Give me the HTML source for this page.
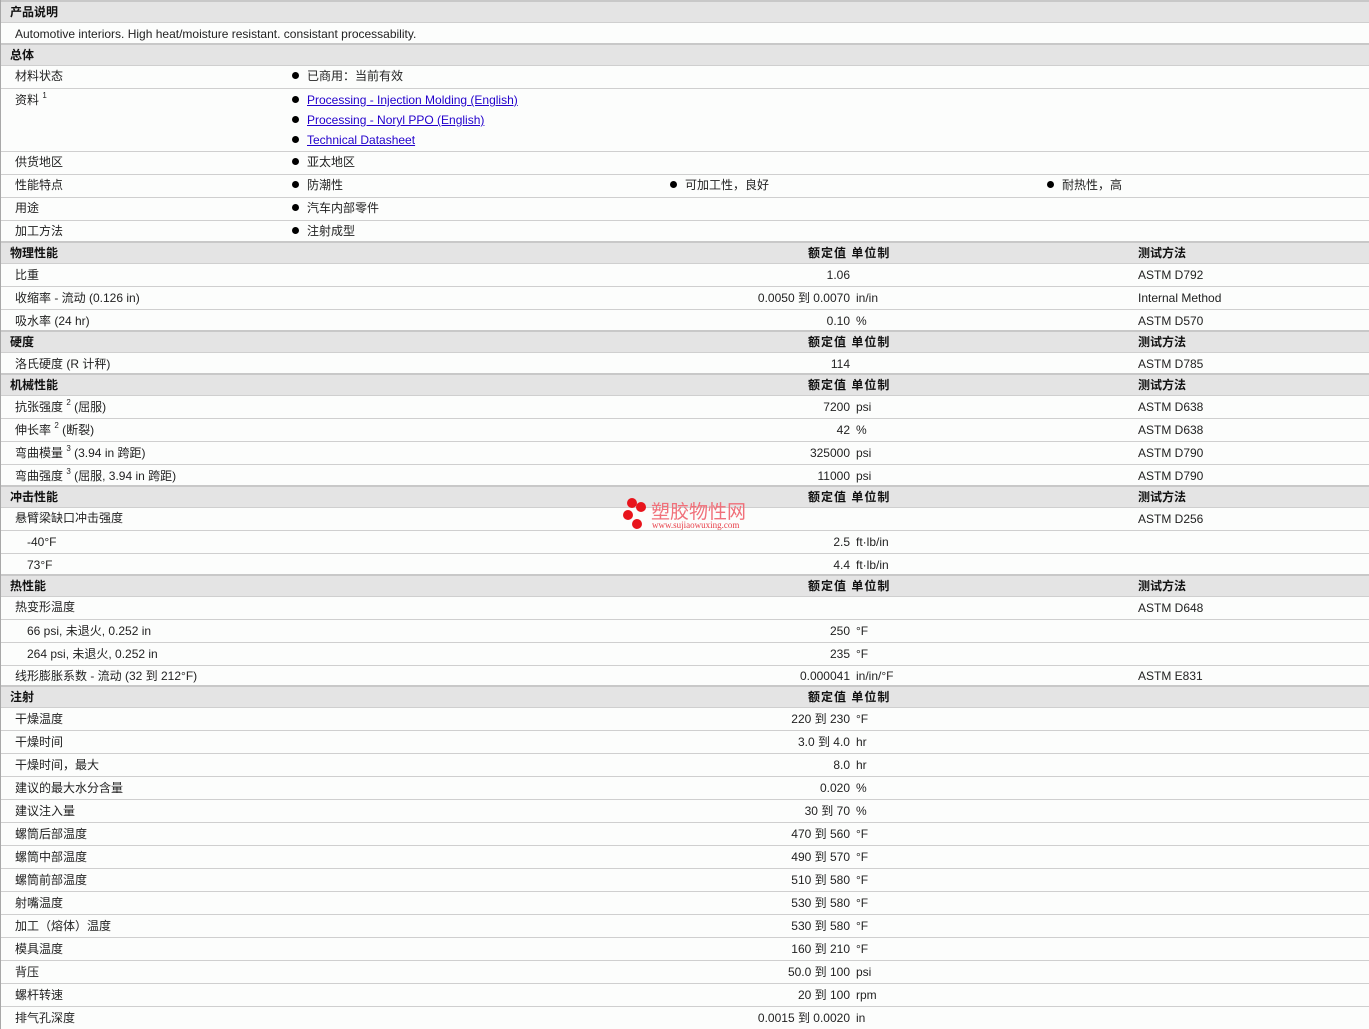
<!DOCTYPE html>
<html><head><meta charset="utf-8"><style>
*{margin:0;padding:0;box-sizing:border-box}
body{width:1369px;height:1029px;background:#fcfdfc;font-family:"Liberation Sans","Noto Sans CJK SC",sans-serif;font-size:12px;color:#222;position:relative;overflow:hidden}
.edge{position:absolute;left:0;top:0;width:1px;height:1029px;background:#a8a8a8}
.r{position:absolute;left:1px;width:1368px;border-top:1px solid #cfcfcf}
.h{background:#e4e4e4;border-top:2px solid #c8c8c8;font-weight:bold;color:#111}
.r span{position:absolute;white-space:nowrap}
.l{left:14px}.h .l{left:9px}
.b{left:291px}.b::before{content:"";display:inline-block;width:7px;height:7px;border-radius:50%;background:#000;margin-right:8px;vertical-align:1px}
.v{right:519px;text-align:right}
.u{left:855px}.t{left:1137px}
.hv{left:807px;letter-spacing:1px}
a{color:#2200cc;text-decoration:underline}
sup{font-size:8px;line-height:0;vertical-align:0;position:relative;top:-6px}
</style></head><body>
<div class="edge"></div>
<div class="r h" style="top:0;height:22px;line-height:21px"><span class="l">产品说明</span></div>
<div class="r" style="top:22px;height:22px;line-height:22px"><span class="l">Automotive interiors. High heat/moisture resistant. consistant processability.</span></div>
<div class="r h" style="top:43px;height:22px;line-height:20px"><span class="l">总体</span></div>
<div class="r" style="top:65px;height:23px;line-height:21px"><span class="l">材料状态</span><span class="b">已商用：当前有效</span></div>
<div class="r" style="top:88px;height:63px;line-height:22px"><span class="l">资料 <sup>1</sup></span><span class="b" style="top:0"><a>Processing - Injection Molding (English)</a></span><span class="b" style="top:20px"><a>Processing - Noryl PPO (English)</a></span><span class="b" style="top:40px"><a>Technical Datasheet</a></span></div>
<div class="r" style="top:151px;height:23px;line-height:21px"><span class="l">供货地区</span><span class="b">亚太地区</span></div>
<div class="r" style="top:174px;height:23px;line-height:21px"><span class="l">性能特点</span><span class="b">防潮性</span><span class="b" style="left:669px">可加工性，良好</span><span class="b" style="left:1046px">耐热性，高</span></div>
<div class="r" style="top:197px;height:23px;line-height:21px"><span class="l">用途</span><span class="b">汽车内部零件</span></div>
<div class="r" style="top:220px;height:22px;line-height:21px"><span class="l">加工方法</span><span class="b">注射成型</span></div>

<div class="r h" style="top:241px;height:22px;line-height:20px"><span class="l">物理性能</span><span class="hv">额定值 单位制</span><span class="t">测试方法</span></div>
<div class="r" style="top:263px;height:23px;line-height:22px"><span class="l">比重</span><span class="v">1.06</span><span class="t">ASTM D792</span></div>
<div class="r" style="top:286px;height:23px;line-height:22px"><span class="l">收缩率 - 流动 (0.126 in)</span><span class="v">0.0050 到 0.0070</span><span class="u">in/in</span><span class="t">Internal Method</span></div>
<div class="r" style="top:309px;height:22px;line-height:22px"><span class="l">吸水率 (24 hr)</span><span class="v">0.10</span><span class="u">%</span><span class="t">ASTM D570</span></div>
<div class="r h" style="top:330px;height:22px;line-height:20px"><span class="l">硬度</span><span class="hv">额定值 单位制</span><span class="t">测试方法</span></div>
<div class="r" style="top:352px;height:22px;line-height:22px"><span class="l">洛氏硬度 (R 计秤)</span><span class="v">114</span><span class="t">ASTM D785</span></div>
<div class="r h" style="top:373px;height:22px;line-height:20px"><span class="l">机械性能</span><span class="hv">额定值 单位制</span><span class="t">测试方法</span></div>
<div class="r" style="top:395px;height:23px;line-height:22px"><span class="l">抗张强度 <sup>2</sup> (屈服)</span><span class="v">7200</span><span class="u">psi</span><span class="t">ASTM D638</span></div>
<div class="r" style="top:418px;height:23px;line-height:22px"><span class="l">伸长率 <sup>2</sup> (断裂)</span><span class="v">42</span><span class="u">%</span><span class="t">ASTM D638</span></div>
<div class="r" style="top:441px;height:23px;line-height:22px"><span class="l">弯曲模量 <sup>3</sup> (3.94 in 跨距)</span><span class="v">325000</span><span class="u">psi</span><span class="t">ASTM D790</span></div>
<div class="r" style="top:464px;height:22px;line-height:22px"><span class="l">弯曲强度 <sup>3</sup> (屈服, 3.94 in 跨距)</span><span class="v">11000</span><span class="u">psi</span><span class="t">ASTM D790</span></div>
<div class="r h" style="top:485px;height:22px;line-height:20px"><span class="l">冲击性能</span><span class="hv">额定值 单位制</span><span class="t">测试方法</span></div>
<div class="r" style="top:507px;height:23px;line-height:20px"><span class="l">悬臂梁缺口冲击强度</span><span class="t" style="line-height:22px">ASTM D256</span></div>
<div class="r" style="top:530px;height:23px;line-height:22px"><span class="l" style="left:26px">-40°F</span><span class="v">2.5</span><span class="u">ft·lb/in</span></div>
<div class="r" style="top:553px;height:22px;line-height:22px"><span class="l" style="left:26px">73°F</span><span class="v">4.4</span><span class="u">ft·lb/in</span></div>
<div class="r h" style="top:574px;height:22px;line-height:20px"><span class="l">热性能</span><span class="hv">额定值 单位制</span><span class="t">测试方法</span></div>
<div class="r" style="top:596px;height:23px;line-height:20px"><span class="l">热变形温度</span><span class="t" style="line-height:22px">ASTM D648</span></div>
<div class="r" style="top:619px;height:23px;line-height:22px"><span class="l" style="left:26px">66 psi, 未退火, 0.252 in</span><span class="v">250</span><span class="u">°F</span></div>
<div class="r" style="top:642px;height:23px;line-height:22px"><span class="l" style="left:26px">264 psi, 未退火, 0.252 in</span><span class="v">235</span><span class="u">°F</span></div>
<div class="r" style="top:665px;height:21px;line-height:21px"><span class="l">线形膨胀系数 - 流动 (32 到 212°F)</span><span class="v">0.000041</span><span class="u">in/in/°F</span><span class="t">ASTM E831</span></div>
<div class="r h" style="top:685px;height:22px;line-height:20px"><span class="l">注射</span><span class="hv">额定值 单位制</span></div>
<div class="r" style="top:707px;height:23px;line-height:22px"><span class="l">干燥温度</span><span class="v">220 到 230</span><span class="u">°F</span></div>
<div class="r" style="top:730px;height:23px;line-height:22px"><span class="l">干燥时间</span><span class="v">3.0 到 4.0</span><span class="u">hr</span></div>
<div class="r" style="top:753px;height:23px;line-height:22px"><span class="l">干燥时间，最大</span><span class="v">8.0</span><span class="u">hr</span></div>
<div class="r" style="top:776px;height:23px;line-height:22px"><span class="l">建议的最大水分含量</span><span class="v">0.020</span><span class="u">%</span></div>
<div class="r" style="top:799px;height:23px;line-height:22px"><span class="l">建议注入量</span><span class="v">30 到 70</span><span class="u">%</span></div>
<div class="r" style="top:822px;height:23px;line-height:22px"><span class="l">螺筒后部温度</span><span class="v">470 到 560</span><span class="u">°F</span></div>
<div class="r" style="top:845px;height:23px;line-height:22px"><span class="l">螺筒中部温度</span><span class="v">490 到 570</span><span class="u">°F</span></div>
<div class="r" style="top:868px;height:23px;line-height:22px"><span class="l">螺筒前部温度</span><span class="v">510 到 580</span><span class="u">°F</span></div>
<div class="r" style="top:891px;height:23px;line-height:22px"><span class="l">射嘴温度</span><span class="v">530 到 580</span><span class="u">°F</span></div>
<div class="r" style="top:914px;height:23px;line-height:22px"><span class="l">加工（熔体）温度</span><span class="v">530 到 580</span><span class="u">°F</span></div>
<div class="r" style="top:937px;height:23px;line-height:22px"><span class="l">模具温度</span><span class="v">160 到 210</span><span class="u">°F</span></div>
<div class="r" style="top:960px;height:23px;line-height:22px"><span class="l">背压</span><span class="v">50.0 到 100</span><span class="u">psi</span></div>
<div class="r" style="top:983px;height:23px;line-height:22px"><span class="l">螺杆转速</span><span class="v">20 到 100</span><span class="u">rpm</span></div>
<div class="r" style="top:1006px;height:23px;line-height:22px"><span class="l">排气孔深度</span><span class="v">0.0015 到 0.0020</span><span class="u">in</span></div>

<svg style="position:absolute;left:620px;top:496px" width="40" height="36"><circle cx="12" cy="7" r="5" fill="#e8141c"/><circle cx="21" cy="11" r="5" fill="#e8141c"/><circle cx="8" cy="19" r="5" fill="#e8141c"/><circle cx="17" cy="28" r="5" fill="#e8141c"/></svg>
<div style="position:absolute;left:651px;top:500px;color:#f0707a;font-size:19px;line-height:21px;font-family:'Noto Sans CJK SC',sans-serif">塑胶物性网</div>
<div style="position:absolute;left:652px;top:520px;color:#e8404a;font-size:9px;font-family:'Liberation Serif',serif">www.sujiaowuxing.com</div>
</body></html>
